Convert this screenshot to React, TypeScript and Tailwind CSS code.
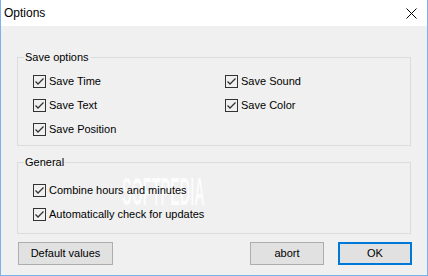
import React from "react";

function Check({ label }: { label: string }) {
  return (
    <div className="flex items-center h-[13px]">
      <div className="w-[13px] h-[13px] border border-[#333333] bg-[#f0f0f0] flex items-center justify-center shrink-0">
        <svg width="11" height="11" viewBox="0 0 11 11">
          <polyline points="1.5,5.5 4,8 9.5,2.5" fill="none" stroke="#333333" strokeWidth="1.3" />
        </svg>
      </div>
      <span className="ml-[3px] text-[11px] leading-[13px] text-black whitespace-nowrap">{label}</span>
    </div>
  );
}

function Group({ title, className, children }: { title: string; className: string; children: React.ReactNode }) {
  return (
    <div className={"relative border border-[#dcdcdc] " + className}>
      <span className="absolute -top-[7px] left-[6px] px-[1px] bg-[#f0f0f0] text-[11px] leading-[13px] text-black">
        {title}
      </span>
      {children}
    </div>
  );
}

function Btn({ label, w, primary }: { label: string; w: string; primary?: boolean }) {
  return (
    <div
      className={
        "h-[23px] flex items-center justify-center bg-[#e1e1e1] text-[11px] text-black " +
        w +
        (primary ? " border-2 border-[#0078d7]" : " border border-[#adadad]")
      }
    >
      {label}
    </div>
  );
}

export default function App() {
  return (
    <div
      className="w-[428px] h-[276px] flex flex-col border-x border-b border-[#7ab2ea] bg-[#f0f0f0] relative overflow-hidden"
      style={{ fontFamily: '"Liberation Sans", Arial, sans-serif' }}
    >
      <div
        className="absolute left-[121px] top-[164px] text-[38px] font-bold text-white pointer-events-none z-0"
        style={{ opacity: 0.8, textShadow: "0 0 1px rgba(0,0,0,0.06)", transform: "scaleX(0.38)", transformOrigin: "left top" }}
      >
        SOFTPEDIA
      </div>
      <div className="relative z-10 h-[26px] bg-white flex items-center justify-between pl-[3px] pr-[10px] shrink-0">
        <span className="text-[12px] text-black">Options</span>
        <svg width="11" height="11" viewBox="0 0 11 11">
          <path d="M0.5 0.5 L10.5 10.5 M10.5 0.5 L0.5 10.5" stroke="#000" strokeWidth="1" />
        </svg>
      </div>
      <div className="relative z-10 flex flex-col pl-[16px] pr-[16px]">
        <Group title="Save options" className="mt-[31px] w-[394px] h-[89px] pl-[15px] pt-[17px]">
          <div className="grid grid-cols-[192px_1fr] gap-y-[11px]">
            <Check label="Save Time" />
            <Check label="Save Sound" />
            <Check label="Save Text" />
            <Check label="Save Color" />
            <Check label="Save Position" />
          </div>
        </Group>
        <Group title="General" className="mt-[16px] w-[394px] h-[72px] pl-[15px] pt-[21px]">
          <div className="flex flex-col gap-y-[11px]">
            <Check label="Combine hours and minutes" />
            <Check label="Automatically check for updates" />
          </div>
        </Group>
        <div className="mt-[8px] flex items-center">
          <div className="ml-[1px]">
            <Btn label="Default values" w="w-[95px]" />
          </div>
          <div className="ml-auto flex gap-[14px] mr-[-1px]">
            <Btn label="abort" w="w-[74px]" />
            <Btn label="OK" w="w-[74px]" primary />
          </div>
        </div>
      </div>
    </div>
  );
}
